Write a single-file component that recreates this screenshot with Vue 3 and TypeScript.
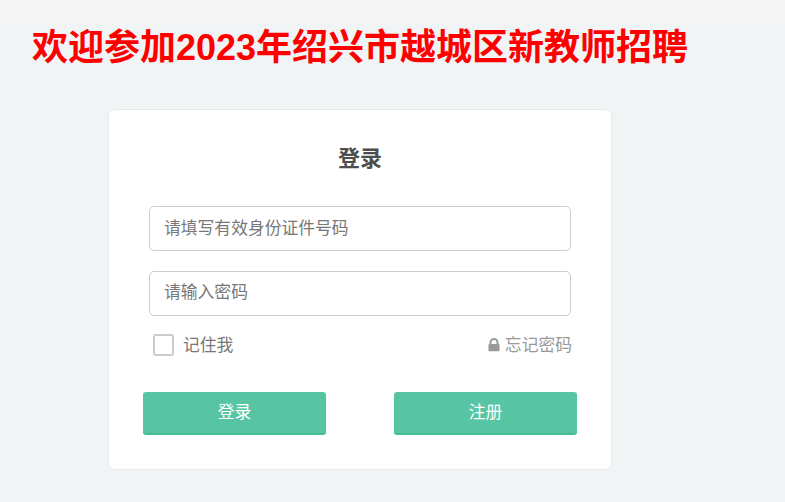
<script setup lang="ts">
import { ref } from 'vue'

const idNumber = ref('')
const password = ref('')
const remember = ref(false)
</script>

<template>
  <div class="page">
    <div class="top-strip"></div>
    <h1 class="welcome">欢迎参加2023年绍兴市越城区新教师招聘</h1>
    <div class="login-card">
      <h2 class="card-title">登录</h2>
      <form class="login-form" @submit.prevent>
        <input v-model="idNumber" class="field" type="text" placeholder="请填写有效身份证件号码" />
        <input v-model="password" class="field" type="password" placeholder="请输入密码" />
        <div class="options">
          <label class="remember">
            <input v-model="remember" type="checkbox" />
            <span class="box"></span>
            <span class="option-text">记住我</span>
          </label>
          <a class="forgot" href="#">
            <svg class="lock" width="12" height="14" viewBox="0 0 12 14">
              <path d="M1.5 6V4.5a4.5 4.5 0 0 1 9 0V6h.3c.4 0 .7.3.7.7v5.8c0 .4-.3.7-.7.7H1.2a.7.7 0 0 1-.7-.7V6.700c0-.4.3-.7.7-.7h.3Zm2 0h5V4.500a2.500 2.500 0 0 0-5 0V6Z" fill="#999" />
            </svg>
            <span class="option-text">忘记密码</span>
          </a>
        </div>
        <div class="actions">
          <button class="btn" type="submit">登录</button>
          <button class="btn" type="button">注册</button>
        </div>
      </form>
    </div>
  </div>
</template>

<style>
html,
body {
  margin: 0;
  background: #f0f4f5;
}
</style>

<style scoped>
.page {
  height: 502px;
  overflow: hidden;
  font-family: "Liberation Sans", "Noto Sans CJK SC", sans-serif;
  background: #f0f4f5;
}

.top-strip {
  height: 22px;
  background: #f5f5f5;
}

.welcome {
  margin: 0 0 0 32px;
  height: 87px;
  padding-top: 1px;
  box-sizing: border-box;
  font-size: 36px;
  line-height: 50px;
  font-weight: 700;
  color: #ff0000;
}

.login-card {
  box-sizing: border-box;
  width: 504px;
  height: 361px;
  margin-left: 108px;
  padding: 35px 34px 0;
  background: #fff;
  border: 1px solid #e6e9eb;
  border-radius: 6px;
}

.card-title {
  margin: 0 0 33px;
  font-size: 22px;
  line-height: 28px;
  font-weight: 700;
  text-align: center;
  color: #4d4d4d;
}

.login-form {
  display: flex;
  flex-direction: column;
}

.field {
  box-sizing: border-box;
  width: 422px;
  height: 45px;
  margin: 0 0 20px 6px;
  padding: 0 14px;
  font: inherit;
  font-size: 16.8px;
  color: #555;
  background: #fff;
  border: 1px solid #ccc;
  border-radius: 5px;
  outline: none;
}

.field[type="password"] {
  padding-bottom: 1px;
}

.field::placeholder {
  color: #777;
  opacity: 1;
}

.options {
  display: flex;
  align-items: center;
  justify-content: space-between;
  width: 419px;
  height: 22px;
  margin: -2px 0 36px 10px;
  font-size: 16.8px;
}

.option-text {
  padding-bottom: 2px;
}

.remember {
  display: flex;
  align-items: center;
  gap: 9px;
  color: #777;
  cursor: pointer;
}

.remember input {
  display: none;
}

.box {
  box-sizing: border-box;
  width: 21px;
  height: 22px;
  border: 2px solid #ccc;
  border-radius: 3px;
}

.forgot {
  display: flex;
  align-items: center;
  gap: 5px;
  color: #999;
  text-decoration: none;
}

.actions {
  display: flex;
  justify-content: space-between;
}

.btn {
  width: 183px;
  height: 43px;
  padding: 0 0 4px;
  font: inherit;
  font-size: 16.8px;
  color: #fff;
  background: #57c5a4;
  border: none;
  border-bottom: 2px solid #45bc98;
  border-radius: 3px;
  cursor: pointer;
}
</style>
